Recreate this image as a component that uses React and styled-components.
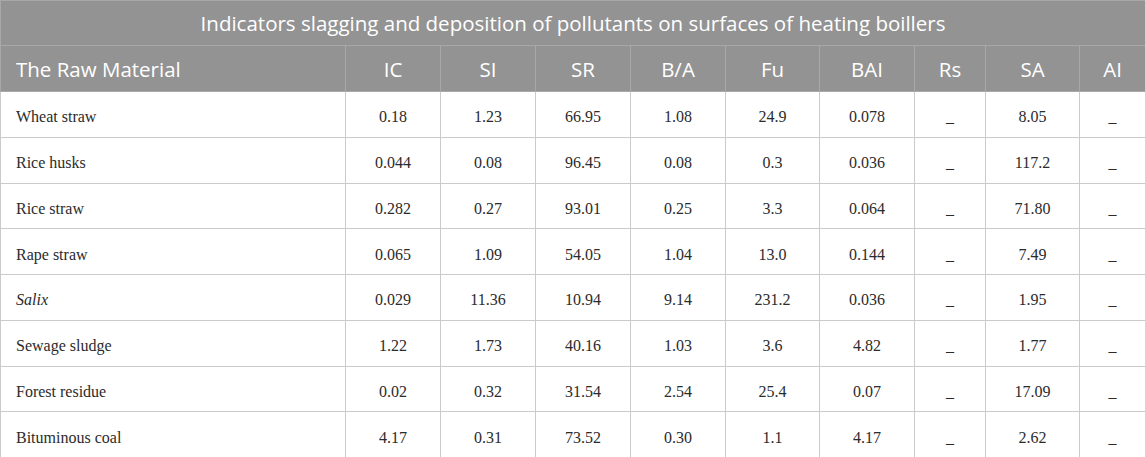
import React from "react";
import styled, { createGlobalStyle } from "styled-components";

const Global = createGlobalStyle`
  html, body { margin: 0; padding: 0; background: #fff; }
`;

const Table = styled.table`
  width: 1145px;
  border-collapse: collapse;
  table-layout: fixed;
`;

const TitleCell = styled.th`
  height: 45px;
  padding: 0;
  background: #939393;
  color: #fff;
  font-family: "Open Sans", sans-serif;
  font-weight: 400;
  font-size: 20.5px;
  text-align: center;
  border: 1px solid #a8a8a8;
  box-sizing: border-box;
`;

const HeadCell = styled.th`
  height: 46px;
  padding: 0 ${(p) => (p.$left ? "15px" : "0")};
  background: #939393;
  color: #fff;
  font-family: "Open Sans", sans-serif;
  font-weight: 400;
  font-size: 20.5px;
  text-align: ${(p) => (p.$left ? "left" : "center")};
  border: 1px solid #a8a8a8;
  box-sizing: border-box;
`;

const Cell = styled.td`
  height: 45.75px;
  padding: 6px ${(p) => (p.$left ? "15px" : "0")} 0;
  color: #2b2b2b;
  font-family: "Liberation Serif", serif;
  font-size: 16px;
  font-style: ${(p) => (p.$italic ? "italic" : "normal")};
  text-align: ${(p) => (p.$left ? "left" : "center")};
  border: 1px solid #cbcbcb;
  box-sizing: border-box;
`;

const widths = [345, 95, 95, 95, 95, 94, 95, 71, 94, 66];
const heads = ["The Raw Material", "IC", "SI", "SR", "B/A", "Fu", "BAI", "Rs", "SA", "AI"];
const rows = [
  ["Wheat straw", "0.18", "1.23", "66.95", "1.08", "24.9", "0.078", "_", "8.05", "_"],
  ["Rice husks", "0.044", "0.08", "96.45", "0.08", "0.3", "0.036", "_", "117.2", "_"],
  ["Rice straw", "0.282", "0.27", "93.01", "0.25", "3.3", "0.064", "_", "71.80", "_"],
  ["Rape straw", "0.065", "1.09", "54.05", "1.04", "13.0", "0.144", "_", "7.49", "_"],
  ["Salix", "0.029", "11.36", "10.94", "9.14", "231.2", "0.036", "_", "1.95", "_"],
  ["Sewage sludge", "1.22", "1.73", "40.16", "1.03", "3.6", "4.82", "_", "1.77", "_"],
  ["Forest residue", "0.02", "0.32", "31.54", "2.54", "25.4", "0.07", "_", "17.09", "_"],
  ["Bituminous coal", "4.17", "0.31", "73.52", "0.30", "1.1", "4.17", "_", "2.62", "_"],
];

export default function App() {
  return (
    <>
      <Global />
      <Table>
        <colgroup>
          {widths.map((w, i) => (
            <col key={i} style={{ width: w }} />
          ))}
        </colgroup>
        <thead>
          <tr>
            <TitleCell colSpan={10}>
              Indicators slagging and deposition of pollutants on surfaces of heating boillers
            </TitleCell>
          </tr>
          <tr>
            {heads.map((h, i) => (
              <HeadCell key={h} $left={i === 0}>
                {h}
              </HeadCell>
            ))}
          </tr>
        </thead>
        <tbody>
          {rows.map((r) => (
            <tr key={r[0]}>
              {r.map((v, i) => (
                <Cell key={i} $left={i === 0} $italic={i === 0 && v === "Salix"}>
                  {v}
                </Cell>
              ))}
            </tr>
          ))}
        </tbody>
      </Table>
    </>
  );
}
